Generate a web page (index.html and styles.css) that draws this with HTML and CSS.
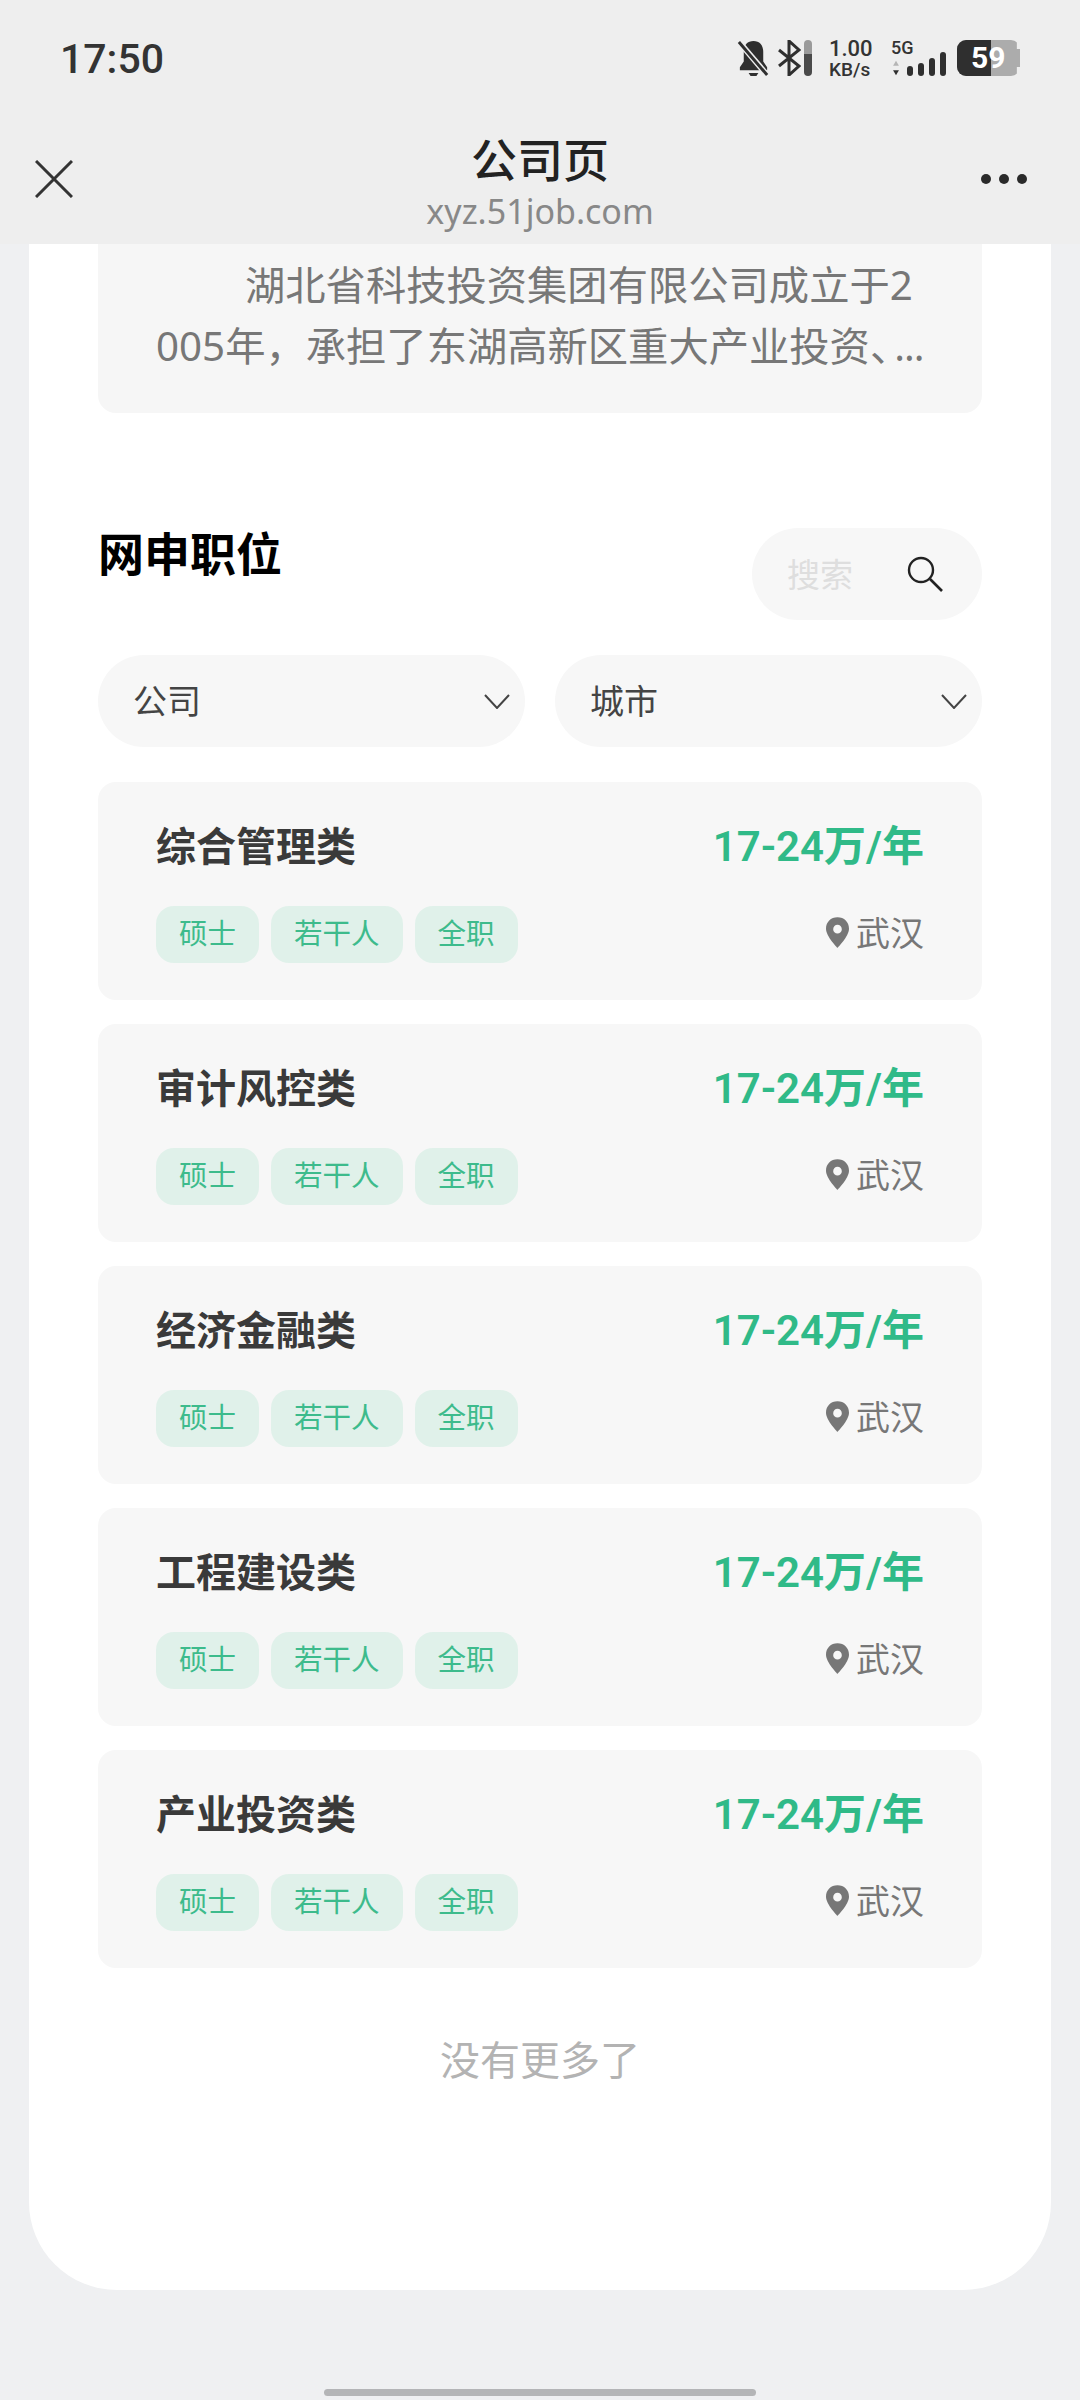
FILE: index.html
```html
<!DOCTYPE html>
<html lang="zh-CN">
<head>
    <meta charset="UTF-8">
    <meta name="viewport" content="width=device-width, initial-scale=1.0">
    <title>公司页</title>
    <link rel="stylesheet" href="styles.css">
</head>
<body>

    <header class="top">
        <div class="status">
            <span class="time">17:50</span>
            <div class="status-icons">
                <svg class="ic-bell" viewBox="0 0 32 38">
                    <path d="M16 1c-6 0-10 4-10 11v10l-4 6v3h28v-3l-4-6V12C26 5 22 1 16 1z" fill="#2f2f2f"/>
                    <path d="M11 34h10l-2 3h-6z" fill="#2f2f2f"/>
                    <path d="M2 3l28 33" stroke="#eee" stroke-width="6"/>
                    <path d="M1 2l29 34" stroke="#2f2f2f" stroke-width="3"/>
                </svg>
                <svg class="ic-bt" viewBox="0 0 24 36">
                    <path d="M2 10l20 16-10 9V1l10 9L2 26" fill="none" stroke="#2f2f2f" stroke-width="3"/>
                </svg>
                <span class="bt-level"></span>
                <div class="speed"><b>1.00</b><b class="unit">KB/s</b></div>
                <div class="signal">
                    <span class="net">5G</span>
                    <div class="bars">
                        <svg class="ic-updown" viewBox="0 0 10 22">
                            <path d="M5 1l4 7H1z" fill="#b5b5b5"/>
                            <path d="M5 21l4-7H1z" fill="#2f2f2f"/>
                        </svg>
                        <i class="bar b1"></i><i class="bar b2"></i><i class="bar b3"></i><i class="bar b4"></i>
                    </div>
                </div>
                <div class="battery"><span class="level"></span><span class="pct">59</span></div>
            </div>
        </div>
        <div class="nav">
            <svg class="ic-close" viewBox="0 0 38 38">
                <path d="M1 1l36 36M37 1L1 37" stroke="#333" stroke-width="3" fill="none"/>
            </svg>
            <div class="nav-title">
                <h1>公司页</h1>
                <p>xyz.51job.com</p>
            </div>
            <div class="dots"><i></i><i></i><i></i></div>
        </div>
    </header>

    <main class="panel">
        <p class="intro">湖北省科技投资集团有限公司成立于2<br>005年，承担了东湖高新区重大产业投资<span class="pause">、</span><span class="more">...</span></p>

        <div class="list-head">
            <h2>网申职位</h2>
            <div class="search">
                <span>搜索</span>
                <svg class="ic-search" viewBox="0 0 36 36">
                    <circle cx="14" cy="14" r="12" fill="none" stroke="#222" stroke-width="2.4"/>
                    <path d="M23 23l12 12" stroke="#222" stroke-width="2.600"/>
                </svg>
            </div>
        </div>

        <div class="filters">
            <div class="filter">
                <span>公司</span>
                <svg class="ic-chevron" viewBox="0 0 26 15"><path d="M1 1l12 13L25 1" fill="none" stroke="#444" stroke-width="2"/></svg>
            </div>
            <div class="filter">
                <span>城市</span>
                <svg class="ic-chevron" viewBox="0 0 26 15"><path d="M1 1l12 13L25 1" fill="none" stroke="#444" stroke-width="2"/></svg>
            </div>
        </div>

        <div class="jobs">
            <div class="job">
                <div class="job-row">
                    <h3>综合管理类</h3>
                    <span class="salary">17-24万/年</span>
                </div>
                <div class="job-row">
                    <div class="tags"><span class="tag">硕士</span><span class="tag">若干人</span><span class="tag">全职</span></div>
                    <span class="place">
                        <svg class="ic-pin" viewBox="0 0 24 32"><path fill-rule="evenodd" d="M12 0C5 0 0 5 0 12c0 8 12 20 12 20s12-12 12-20C24 5 19 0 12 0zm0 8a4.500 4.500 0 110 9 4.500 4.500 0 010-9z" fill="#777"/></svg>
                        武汉
                    </span>
                </div>
            </div>
            <div class="job">
                <div class="job-row">
                    <h3>审计风控类</h3>
                    <span class="salary">17-24万/年</span>
                </div>
                <div class="job-row">
                    <div class="tags"><span class="tag">硕士</span><span class="tag">若干人</span><span class="tag">全职</span></div>
                    <span class="place">
                        <svg class="ic-pin" viewBox="0 0 24 32"><path fill-rule="evenodd" d="M12 0C5 0 0 5 0 12c0 8 12 20 12 20s12-12 12-20C24 5 19 0 12 0zm0 8a4.500 4.500 0 110 9 4.500 4.500 0 010-9z" fill="#777"/></svg>
                        武汉
                    </span>
                </div>
            </div>
            <div class="job">
                <div class="job-row">
                    <h3>经济金融类</h3>
                    <span class="salary">17-24万/年</span>
                </div>
                <div class="job-row">
                    <div class="tags"><span class="tag">硕士</span><span class="tag">若干人</span><span class="tag">全职</span></div>
                    <span class="place">
                        <svg class="ic-pin" viewBox="0 0 24 32"><path fill-rule="evenodd" d="M12 0C5 0 0 5 0 12c0 8 12 20 12 20s12-12 12-20C24 5 19 0 12 0zm0 8a4.500 4.500 0 110 9 4.500 4.500 0 010-9z" fill="#777"/></svg>
                        武汉
                    </span>
                </div>
            </div>
            <div class="job">
                <div class="job-row">
                    <h3>工程建设类</h3>
                    <span class="salary">17-24万/年</span>
                </div>
                <div class="job-row">
                    <div class="tags"><span class="tag">硕士</span><span class="tag">若干人</span><span class="tag">全职</span></div>
                    <span class="place">
                        <svg class="ic-pin" viewBox="0 0 24 32"><path fill-rule="evenodd" d="M12 0C5 0 0 5 0 12c0 8 12 20 12 20s12-12 12-20C24 5 19 0 12 0zm0 8a4.500 4.500 0 110 9 4.500 4.500 0 010-9z" fill="#777"/></svg>
                        武汉
                    </span>
                </div>
            </div>
            <div class="job">
                <div class="job-row">
                    <h3>产业投资类</h3>
                    <span class="salary">17-24万/年</span>
                </div>
                <div class="job-row">
                    <div class="tags"><span class="tag">硕士</span><span class="tag">若干人</span><span class="tag">全职</span></div>
                    <span class="place">
                        <svg class="ic-pin" viewBox="0 0 24 32"><path fill-rule="evenodd" d="M12 0C5 0 0 5 0 12c0 8 12 20 12 20s12-12 12-20C24 5 19 0 12 0zm0 8a4.500 4.500 0 110 9 4.500 4.500 0 010-9z" fill="#777"/></svg>
                        武汉
                    </span>
                </div>
            </div>
        </div>

        <p class="no-more">没有更多了</p>
    </main>

    <div class="home-bar"></div>

</body>
</html>
```

FILE: styles.css
```css
* {
    margin: 0;
    padding: 0;
    box-sizing: border-box;
}

body {
    width: 1080px;
    height: 2400px;
    overflow: hidden;
    background: #eff0f2;
    font-family: "Noto Sans", "Noto Sans CJK SC", sans-serif;
    text-spacing-trim: space-all;
    display: flex;
    flex-direction: column;
}

/* Status bar and title bar */
.top {
    height: 244px;
    background: #eeeeee;
    flex: none;
}

.status {
    height: 116px;
    padding: 36px 60px 0 60px;
    display: flex;
    justify-content: space-between;
    align-items: flex-start;
}

.time {
    font-family: Roboto, sans-serif;
    font-size: 41px;
    line-height: 46px;
    font-weight: 500;
    color: #333;
}

.status-icons {
    display: flex;
    align-items: flex-start;
    padding-top: 4px;
}

.ic-bell {
    width: 33px;
    height: 37px;
    margin-right: 7px;
}

.ic-bt {
    width: 24px;
    height: 36px;
}

.bt-level {
    width: 8px;
    height: 36px;
    margin: 0 17px 0 3px;
    border-radius: 4px;
    background: linear-gradient(#9a9a9a 40%, #4a4a4a 40%);
}

.speed {
    display: flex;
    flex-direction: column;
    width: 61px;
    margin-top: -2px;
    margin-right: 1px;
    font-family: Roboto, sans-serif;
    color: #333;
}

.speed b {
    font-size: 22px;
    line-height: 22px;
    font-weight: 500;
}

.speed .unit {
    font-size: 19px;
    line-height: 20px;
}

.signal {
    width: 56px;
    margin-right: 10px;
    font-family: Roboto, sans-serif;
    color: #333;
}

.net {
    display: block;
    font-size: 18px;
    line-height: 15px;
    font-weight: 500;
}

.bars {
    display: flex;
    align-items: flex-end;
    gap: 4.5px;
    height: 21px;
}

.ic-updown {
    width: 10px;
    height: 16px;
    margin-right: 1px;
}

.bar {
    width: 6.5px;
    border-radius: 3px;
    background: #2f2f2f;
}

.b1 { height: 10px; }
.b2 { height: 13px; }
.b3 { height: 18px; }
.b4 { height: 24px; }

.battery {
    position: relative;
    width: 63px;
    height: 36px;
    border-radius: 9px;
    overflow: hidden;
    background: #acacac;
    clip-path: polygon(0 0, 95% 0, 95% 25%, 100% 25%, 100% 75%, 95% 75%, 95% 100%, 0 100%);
}

.level {
    display: block;
    width: 34px;
    height: 100%;
    background: #2f2f2f;
}

/* percentage sits on top of the fill */
.pct {
    position: absolute;
    left: 14px;
    top: 1px;
    font-family: Roboto, sans-serif;
    font-size: 30px;
    line-height: 34px;
    font-weight: 700;
    color: #fff;
}

.nav {
    display: grid;
    grid-template-columns: 1fr auto 1fr;
    padding: 0 50px 0 35px;
}

.ic-close {
    width: 38px;
    height: 38px;
    margin-top: 44px;
}

.nav-title {
    text-align: center;
    margin-top: 14px;
    margin-left: 15px;
}

.nav-title h1 {
    font-size: 46px;
    line-height: 58px;
    font-weight: 500;
    color: #222;
}

.nav-title p {
    font-size: 34px;
    line-height: 46px;
    color: #888;
}

.dots {
    justify-self: end;
    display: flex;
    gap: 8px;
    margin-top: 58px;
    margin-right: 3px;
}

.dots i {
    width: 10px;
    height: 10px;
    border-radius: 50%;
    background: #2a2a2a;
}

/* White sheet holding the page content */
.panel {
    height: 2046px;
    margin: 0 29px;
    padding: 0 69px;
    background: #fff;
    border-radius: 0 0 88px 88px;
    flex: none;
}

.intro {
    height: 169px;
    padding: 10px 40px 0 58px;
    background: #f6f6f6;
    border-radius: 0 0 18px 18px;
    font-size: 40.3px;
    line-height: 61px;
    color: #777;
    text-indent: 89px;
    white-space: nowrap;
}

/* the dots sit tight against the pause mark */
.pause {
    letter-spacing: -16px;
}

.more {
    letter-spacing: -1px;
}

.list-head {
    display: flex;
    justify-content: space-between;
    align-items: flex-start;
    margin-top: 114px;
}

.list-head h2 {
    font-size: 46px;
    line-height: 52px;
    font-weight: 700;
    color: #000;
}

.search {
    width: 230px;
    height: 92px;
    margin-top: 1px;
    padding: 0 39px 0 35px;
    border-radius: 46px;
    background: #f7f7f7;
    display: flex;
    justify-content: space-between;
    align-items: center;
    font-size: 33px;
    color: #dedede;
}

.search span {
    padding-bottom: 2px;
}

.ic-search {
    width: 36px;
    height: 36px;
}

.filters {
    display: flex;
    gap: 30px;
    margin-top: 35px;
}

.filter {
    flex: 1;
    height: 92px;
    padding: 0 15px 0 35px;
    border-radius: 46px;
    background: #f7f7f7;
    display: flex;
    justify-content: space-between;
    align-items: center;
    font-size: 34px;
    color: #444;
}

.filter span {
    padding-bottom: 4px;
}

.ic-chevron {
    width: 26px;
    height: 15px;
}

.jobs {
    display: flex;
    flex-direction: column;
    gap: 24px;
    margin-top: 35px;
}

.job {
    height: 218px;
    padding: 36px 58px 0;
    background: #f7f7f7;
    border-radius: 18px;
}

.job-row {
    display: flex;
    justify-content: space-between;
    align-items: center;
}

.job-row + .job-row {
    margin-top: 32px;
}

.job h3 {
    font-size: 40px;
    line-height: 54px;
    font-weight: 700;
    color: #3a3a3a;
}

.salary {
    font-family: Roboto, "Noto Sans CJK SC", sans-serif;
    font-size: 42px;
    line-height: 54px;
    font-weight: 600;
    color: #30ba88;
    padding-top: 2px;
}

.tags {
    display: flex;
    gap: 12px;
}

.tag {
    height: 57px;
    padding: 0 23px;
    border-radius: 18px;
    background: #e0f1ea;
    font-size: 28.5px;
    line-height: 55px;
    color: #3dbb8c;
}

.place {
    display: flex;
    align-items: center;
    gap: 7px;
    margin-top: -4px;
    font-size: 34px;
    line-height: 46px;
    color: #777;
}

.ic-pin {
    width: 23px;
    height: 31px;
}

.no-more {
    margin-top: 65px;
    text-align: center;
    font-size: 40px;
    line-height: 54px;
    color: #b3b3b3;
}

.home-bar {
    width: 432px;
    height: 7px;
    margin: 99px auto 0;
    border-radius: 4px;
    background: #b4b5b7;
    flex: none;
}
```
